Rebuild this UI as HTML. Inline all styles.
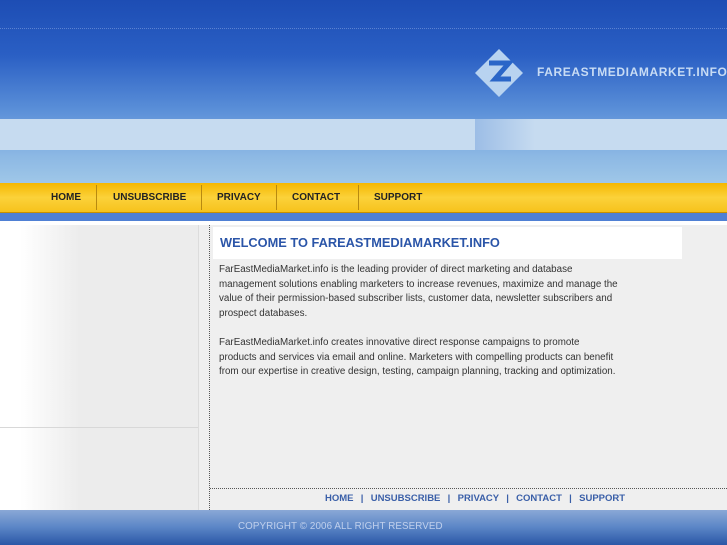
<!DOCTYPE html>
<html><head><style>
body{margin:0;width:727px;height:545px;overflow:hidden;font-family:"Liberation Sans",sans-serif;background:#efefef;position:relative}
div{position:absolute}
</style></head><body>
<div style="left:0;top:0;width:727px;height:183px;background:linear-gradient(#1d4db4 0%,#2a5fc4 30%,#5a8fd8 60%,#8cb8e4 85%,#9fc7e8 100%)"></div>
<div style="left:0;top:28px;width:727px;border-top:1px dotted #7ea0e0;opacity:.6"></div>
<div style="left:0;top:119px;width:475px;height:31px;background:#c6dbf0"></div>
<div style="left:475px;top:119px;width:252px;height:31px;background:linear-gradient(90deg,#9cbde6,#c6dbf0 60px)"></div>
<svg style="position:absolute;left:475px;top:49px" width="48" height="48" viewBox="0 0 48 48"><polygon points="24,0 48,24 24,48 0,24" fill="#b8d3f0"/><path d="M14 14H34L20 30H36" stroke="#2a66c8" stroke-width="5" fill="none"/></svg>
<div style="left:537px;top:65px;color:#c8dcf4;font-weight:bold;font-size:12px;letter-spacing:0.6px;white-space:nowrap">FAREASTMEDIAMARKET.INFO</div>
<div style="left:0;top:183px;width:727px;height:29px;background:linear-gradient(#f5b700,#fbd23a 50%,#f6c21c);border-bottom:1px solid #c89000"></div>
<div style="left:0;top:192px;font-size:10px;font-weight:bold;color:#222;width:727px;height:20px">
<span style="position:absolute;left:51px">HOME</span><span style="position:absolute;left:113px">UNSUBSCRIBE</span><span style="position:absolute;left:217px">PRIVACY</span><span style="position:absolute;left:292px">CONTACT</span><span style="position:absolute;left:374px">SUPPORT</span></div>
<div style="left:96px;top:185px;width:1px;height:25px;background:#b88a10"></div>
<div style="left:201px;top:185px;width:1px;height:25px;background:#b88a10"></div>
<div style="left:276px;top:185px;width:1px;height:25px;background:#b88a10"></div>
<div style="left:358px;top:185px;width:1px;height:25px;background:#b88a10"></div>
<div style="left:0;top:213px;width:727px;height:8px;background:#4f80d4"></div>
<div style="left:0;top:221px;width:727px;height:4px;background:#fff"></div>
<div style="left:0;top:225px;width:198px;height:285px;background:linear-gradient(90deg,#fff 20px,#ececec 80px,#ececec);border-right:1px solid #dcdcdc"></div>
<div style="left:0;top:427px;width:198px;border-top:1px solid #d8d8d8"></div>
<div style="left:209px;top:225px;height:285px;border-left:1px dotted #555"></div>
<div style="left:213px;top:227px;width:469px;height:32px;background:#fff"></div>
<div style="left:220px;top:235px;color:#2b55a8;font-weight:bold;font-size:12.8px">WELCOME TO FAREASTMEDIAMARKET.INFO</div>
<div style="left:219px;top:263px;width:404px;font-size:9.8px;line-height:14.6px;color:#333">FarEastMediaMarket.info is the leading provider of direct marketing and database management solutions enabling marketers to increase revenues, maximize and manage the value of their permission-based subscriber lists, customer data, newsletter subscribers and prospect databases.<br><br>FarEastMediaMarket.info creates innovative direct response campaigns to promote<br>products and services via email and online. Marketers with compelling products can benefit from our expertise in creative design, testing, campaign planning, tracking and optimization.</div>
<div style="left:210px;top:488px;width:517px;border-top:1px dotted #555"></div>
<div style="left:325px;top:493px;font-size:9.5px;font-weight:bold;color:#3a5fa8;word-spacing:1px;white-space:nowrap">HOME &nbsp;| &nbsp;UNSUBSCRIBE &nbsp;| &nbsp;PRIVACY &nbsp;| &nbsp;CONTACT &nbsp;| &nbsp;SUPPORT</div>
<div style="left:0;top:510px;width:727px;height:35px;background:linear-gradient(#8aa8d6,#5a85c6 50%,#2a56a6)"></div>
<div style="left:238px;top:521px;font-size:9.8px;color:#c0d0ec;letter-spacing:0.1px">COPYRIGHT © 2006 ALL RIGHT RESERVED</div>
</body></html>
